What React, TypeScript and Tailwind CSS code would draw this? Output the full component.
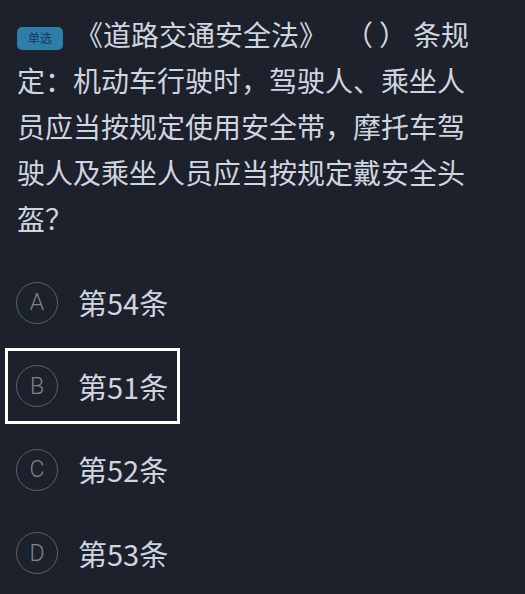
const options = [
  { key: "A", text: "第54条" },
  { key: "B", text: "第51条", marked: true },
  { key: "C", text: "第52条" },
  { key: "D", text: "第53条" },
];

export default function App() {
  return (
    <div
      className="w-[525px] h-[594px] overflow-hidden bg-[#1c212b] text-[#cfd5df] [text-spacing-trim:space-all]"
      style={{ fontFamily: '"Noto Sans CJK SC", "Noto Sans", sans-serif' }}
    >
      <div className="pl-[17px] pr-[40px] pt-[11px] text-[28px] leading-[46px]">
        <span className="inline-flex items-center justify-center align-[3px] w-[46px] h-[23px] mr-[12px] rounded-[5px] bg-[#2d7ea8] text-[12px] leading-none text-[#17395a]">
          单选
        </span>
        《道路交通安全法》
        <span className="ml-[18px]">（</span>
        <span className="ml-[6px]">）</span>
        <span className="ml-[6px]">
          条规定：机动车行驶时，驾驶人、乘坐人员应当按规定使用安全带，摩托车驾驶人及乘坐人员应当按规定戴安全头盔？
        </span>
      </div>

      <div className="mt-[20px] flex flex-col">
        {options.map((o) => (
          <div key={o.key} className="h-[83.5px] flex items-center">
            <div
              className={
                "ml-[5px] w-[175px] h-[76px] flex items-center gap-[20px] pl-[8px] border-[3px] " +
                (o.marked ? "border-white" : "border-transparent")
              }
            >
              <div
                className="w-[42px] h-[42px] rounded-full border border-[#5a606b] flex items-center justify-center text-[23px] font-light leading-none text-[#7d838e]"
                style={{ fontFamily: "Roboto, sans-serif" }}
              >
                {o.key}
              </div>
              <span className="text-[29px] leading-none">{o.text}</span>
            </div>
          </div>
        ))}
      </div>
    </div>
  );
}
